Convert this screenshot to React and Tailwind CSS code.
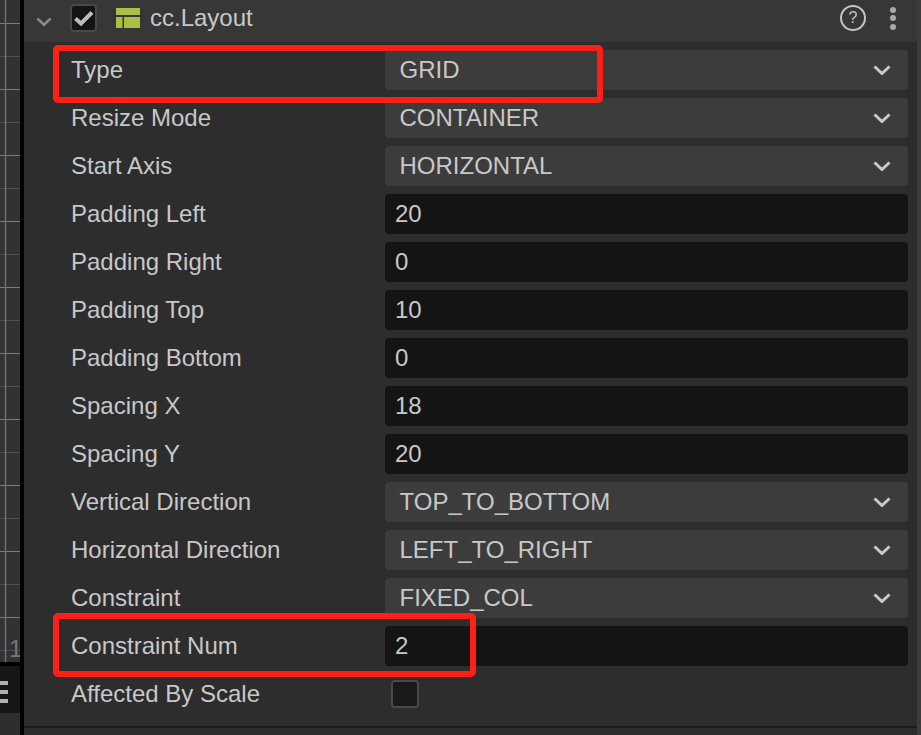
import React from "react";

const ROWS = [
  { label: "Type", kind: "select", value: "GRID" },
  { label: "Resize Mode", kind: "select", value: "CONTAINER" },
  { label: "Start Axis", kind: "select", value: "HORIZONTAL" },
  { label: "Padding Left", kind: "input", value: "20" },
  { label: "Padding Right", kind: "input", value: "0" },
  { label: "Padding Top", kind: "input", value: "10" },
  { label: "Padding Bottom", kind: "input", value: "0" },
  { label: "Spacing X", kind: "input", value: "18" },
  { label: "Spacing Y", kind: "input", value: "20" },
  { label: "Vertical Direction", kind: "select", value: "TOP_TO_BOTTOM" },
  { label: "Horizontal Direction", kind: "select", value: "LEFT_TO_RIGHT" },
  { label: "Constraint", kind: "select", value: "FIXED_COL" },
  { label: "Constraint Num", kind: "input", value: "2" },
  { label: "Affected By Scale", kind: "check" },
];

const GRID_LINES = Array.from({ length: 20 }, (_, i) => 23.5 + i * 33);

function Chevron({ className, color }) {
  return (
    <svg className={className} viewBox="0 0 18 11" fill="none">
      <path d="M1.5 1.5 9 8.5l7.5-7" stroke={color} strokeWidth="3" />
    </svg>
  );
}

function CanvasStrip() {
  return (
    <div className="w-5 shrink-0 flex flex-col">
      <div className="relative h-[662px] bg-[#323232] overflow-hidden">
        <svg className="block" width="20" height="662">
          {GRID_LINES.map((y, i) => (
            <line key={y} x1="0" x2="20" y1={y} y2={y} stroke={i % 2 === 0 ? "#7c7c7c" : "#505050"} strokeWidth="1" />
          ))}
          <line x1="5.5" x2="5.5" y1="0" y2="662" stroke="#727272" strokeWidth="1.4" />
        </svg>
        <span className="absolute left-[9px] top-[636px] text-[24px] leading-[26px] tracking-[-3px] text-[#777777]">1</span>
      </div>
      <div className="h-1 bg-black" />
      <div className="h-[47px] bg-[#161616] flex flex-col gap-[5px] pt-[15px]">
        <div className="w-2 h-[4px] bg-[#b0b0b0]" />
        <div className="w-2 h-[4px] bg-[#b0b0b0]" />
        <div className="w-2 h-[4px] bg-[#b0b0b0]" />
      </div>
      <div className="flex-1 bg-[#2e2e2e]" />
    </div>
  );
}

function Header() {
  return (
    <div className="h-[42px] bg-[#373737] flex items-center pl-3 pr-[21px]">
      <Chevron className="w-4 h-[10px] mt-[1px]" color="#8a8a8a" />
      <div className="ml-[18px] w-[27px] h-[28px] -mt-[6px] rounded border-2 border-[#484848] bg-[#141414] flex items-center justify-center">
        <svg width="21" height="17" viewBox="0 0 21 17" fill="none">
          <path d="M2.5 8.5l5.5 5L19 2.5" stroke="#bcbcbc" strokeWidth="4" />
        </svg>
      </div>
      <svg className="ml-[19px] -mt-[6px]" width="24" height="20" viewBox="0 0 24 20" fill="#adbe46">
        <rect x="0" y="0" width="24" height="7" />
        <rect x="0" y="9" width="6.5" height="11" />
        <rect x="8" y="9" width="16" height="11" />
      </svg>
      <span className="ml-[10px] -mt-[6px] text-[#c8c8c8]">cc.Layout</span>
      <div className="ml-auto -mt-[6px] flex items-center gap-6">
        <div className="w-[26px] h-[26px] rounded-full border-2 border-[#c4c4c4] flex items-center justify-center text-[16px] leading-none text-[#c4c4c4]">?</div>
        <div className="flex flex-col gap-[2.5px]">
          <div className="w-[6px] h-[6px] rounded-full bg-[#a8a8a8]" />
          <div className="w-[6px] h-[6px] rounded-full bg-[#a8a8a8]" />
          <div className="w-[6px] h-[6px] rounded-full bg-[#a8a8a8]" />
        </div>
      </div>
    </div>
  );
}

function Field({ row }) {
  if (row.kind === "check") {
    return <div className="ml-[6px] w-[28px] h-[28px] rounded border-2 border-[#484848] bg-[#1a1a1a]" />;
  }
  if (row.kind === "select") {
    return (
      <div className="flex-1 h-10 rounded bg-[#3c3c3c] flex items-center justify-between pl-[14.5px] pr-[17px]">
        <span>{row.value}</span>
        <Chevron className="w-[18px] h-[11px]" color="#c8c8c8" />
      </div>
    );
  }
  return (
    <div className="flex-1 h-10 rounded bg-[#141414] flex items-center pl-[10px]">
      <span>{row.value}</span>
    </div>
  );
}

export default function App() {
  return (
    <div className="relative w-[921px] h-[735px] flex overflow-hidden bg-[#2d2d2d] text-[24px] text-[#c8c8c8] font-['Liberation_Sans',Arial,sans-serif]">
      <CanvasStrip />
      <div className="w-1 shrink-0 bg-black" />

      <div className="flex-1 flex flex-col">
        <Header />
        <div className="flex flex-col gap-2 pt-2 pl-[47px] pr-[9px]">
          {ROWS.map((row) => (
            <div key={row.label} className="h-10 flex items-center">
              <div className="w-[314px] shrink-0">{row.label}</div>
              <Field row={row} />
            </div>
          ))}
        </div>
        <div className="mt-3 h-[2px] bg-[#1b1b1b]" />
      </div>

      <div className="w-1 shrink-0 bg-[#3c3c3c]" />

      {/* red annotations drawn over the panel */}
      <div className="absolute left-[53px] top-[45px] w-[550px] h-[58px] rounded-[5px] border-[6px] border-[#ff2015]" />
      <div className="absolute left-[53px] top-[613px] w-[423px] h-[64px] rounded-[5px] border-[6px] border-[#ff2015]" />
    </div>
  );
}
